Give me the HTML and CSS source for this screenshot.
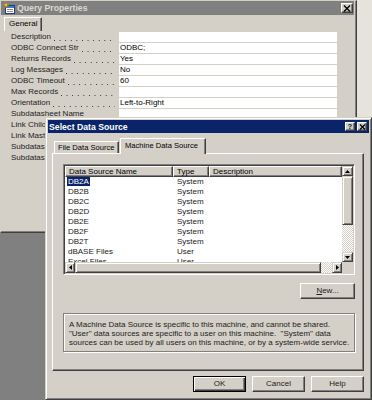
FILE: index.html
```html
<!DOCTYPE html>
<html lang="en">
<head>
    <meta charset="UTF-8">
    <title>Select Data Source</title>
    <link rel="stylesheet" href="styles.css">
</head>
<body>
<div class="desk">

    <!-- Query Properties window (behind) -->
    <div class="win qp">
        <div class="caption inactive">
            <svg class="app-icon" width="12" height="12" viewBox="0 0 12 12">
                <rect x="2.5" y="3.5" width="9" height="8" fill="#fff" stroke="#1c3c8c"/>
                <rect x="3" y="4" width="8" height="2" fill="#4a78c0"/>
                <path d="M4 7.5h6M4 9.5h6" stroke="#909090"/>
                <path d="M3 0L3.8 2.2L6 3L3.8 3.8L3 6L2.2 3.8L0 3L2.2 2.2Z" fill="#ffd200" stroke="#b07800" stroke-width=".5"/>
            </svg>
            <span class="caption-text">Query Properties</span>
            <span class="cap-btn close-big">
                <svg width="8" height="7" viewBox="0 0 8 7"><path d="M1 .5L7 6.5M7 .5L1 6.5" stroke="#000" stroke-width="1.4"/></svg>
            </span>
        </div>
        <div class="qp-tabs"><span class="qp-tab">General</span></div>
        <div class="grid">
            <div class="prop"><span class="prop-name"><span>Description</span><span class="dots"></span></span><span class="prop-val"></span></div>
            <div class="prop"><span class="prop-name"><span>ODBC Connect Str</span><span class="dots"></span></span><span class="prop-val">ODBC;</span></div>
            <div class="prop"><span class="prop-name"><span>Returns Records</span><span class="dots"></span></span><span class="prop-val">Yes</span></div>
            <div class="prop"><span class="prop-name"><span>Log Messages</span><span class="dots"></span></span><span class="prop-val">No</span></div>
            <div class="prop"><span class="prop-name"><span>ODBC Timeout</span><span class="dots"></span></span><span class="prop-val">60</span></div>
            <div class="prop"><span class="prop-name"><span>Max Records</span><span class="dots"></span></span><span class="prop-val"></span></div>
            <div class="prop"><span class="prop-name"><span>Orientation</span><span class="dots"></span></span><span class="prop-val">Left-to-Right</span></div>
            <div class="prop"><span class="prop-name"><span>Subdatasheet Name</span><span class="dots"></span></span><span class="prop-val"></span></div>
            <div class="prop"><span class="prop-name"><span>Link Child Fields</span><span class="dots"></span></span><span class="prop-val"></span></div>
            <div class="prop"><span class="prop-name"><span>Link Master Fields</span><span class="dots"></span></span><span class="prop-val"></span></div>
            <div class="prop"><span class="prop-name"><span>Subdatasheet Height</span><span class="dots"></span></span><span class="prop-val"></span></div>
            <div class="prop"><span class="prop-name"><span>Subdatasheet Expanded</span><span class="dots"></span></span><span class="prop-val"></span></div>
        </div>
    </div>

    <!-- Select Data Source dialog (front) -->
    <div class="win dlg">
        <div class="caption active">
            <span class="caption-text">Select Data Source</span>
            <span class="cap-btn help">?</span>
            <span class="cap-btn">
                <svg width="7" height="6" viewBox="0 0 7 6"><path d="M1 .5L6 5.5M6 .5L1 5.5" stroke="#000" stroke-width="1.3"/></svg>
            </span>
        </div>

        <div class="tabs">
            <span class="tab file">File Data Source</span>
            <span class="tab on">Machine Data Source</span>
        </div>

        <div class="panel">
            <div class="lv">
                <div class="lv-inner">
                    <div class="lv-main">
                        <div class="lv-head">
                            <span class="hd hd-name">Data Source Name</span>
                            <span class="hd hd-type">Type</span>
                            <span class="hd hd-desc">Description</span>
                        </div>
                        <div class="lv-row"><span class="c1"><span class="sel">DB2A</span></span><span class="c2">System</span></div>
                        <div class="lv-row"><span class="c1"><span>DB2B</span></span><span class="c2">System</span></div>
                        <div class="lv-row"><span class="c1"><span>DB2C</span></span><span class="c2">System</span></div>
                        <div class="lv-row"><span class="c1"><span>DB2D</span></span><span class="c2">System</span></div>
                        <div class="lv-row"><span class="c1"><span>DB2E</span></span><span class="c2">System</span></div>
                        <div class="lv-row"><span class="c1"><span>DB2F</span></span><span class="c2">System</span></div>
                        <div class="lv-row"><span class="c1"><span>DB2T</span></span><span class="c2">System</span></div>
                        <div class="lv-row"><span class="c1"><span>dBASE Files</span></span><span class="c2">User</span></div>
                        <div class="lv-row"><span class="c1"><span>Excel Files</span></span><span class="c2">User</span></div>
                    </div>
                    <div class="vs">
                        <span class="sb-btn"><svg width="5" height="3" viewBox="0 0 5 3"><path d="M0 3L2.5 0L5 3Z"/></svg></span>
                        <span class="thumb vthumb"></span>
                        <span class="track"></span>
                        <span class="sb-btn"><svg width="5" height="3" viewBox="0 0 5 3"><path d="M0 0L2.5 3L5 0Z"/></svg></span>
                    </div>
                    <div class="hs">
                        <span class="sb-btn"><svg width="3" height="5" viewBox="0 0 3 5"><path d="M3 0L0 2.5L3 5Z"/></svg></span>
                        <span class="thumb hthumb"></span>
                        <span class="track"></span>
                        <span class="sb-btn"><svg width="3" height="5" viewBox="0 0 3 5"><path d="M0 0L3 2.5L0 5Z"/></svg></span>
                    </div>
                    <div class="corner"></div>
                </div>
            </div>

            <div class="row-right">
                <span class="btn new"><u>N</u>ew...</span>
            </div>

            <div class="desc">
                A Machine Data Source is specific to this machine, and cannot be shared.<br>
                "User" data sources are specific to a user on this machine.&nbsp; "System" data<br>
                sources can be used by all users on this machine, or by a system-wide service.
            </div>
        </div>

        <div class="actions">
            <span class="btn wide default">OK</span>
            <span class="btn wide">Cancel</span>
            <span class="btn wide">Help</span>
        </div>
    </div>

</div>
</body>
</html>
```

FILE: styles.css
```css
* {
    box-sizing: border-box;
}

body {
    margin: 0;
    font-family: "Liberation Sans", Arial, sans-serif;
    font-size: 8px;
    color: #000;
}

.desk {
    position: relative;
    width: 372px;
    height: 400px;
    overflow: hidden;
    background: linear-gradient(to right, #808080 357px, #e6e3dc 357px);
}

.win {
    position: absolute;
    background: #d4d0c8;
}

/* ---------- caption bars ---------- */

.caption {
    display: flex;
    align-items: center;
    font-weight: bold;
    font-size: 8.7px;
    white-space: nowrap;
}

.caption.inactive {
    height: 14px;
    padding: 0 1px 0 2px;
    background: #808080;
    color: #dcd9d2;
}

.caption.active {
    height: 13px;
    padding: 0 2px 0 1px;
    background: #0a246a;
    color: #fff;
}

.app-icon {
    margin-right: 2px;
    flex-shrink: 0;
}

.caption-text {
    flex: 1;
}

.cap-btn {
    display: flex;
    align-items: center;
    justify-content: center;
    width: 10px;
    height: 9px;
    background: #d4d0c8;
    border: 1px solid;
    border-color: #fff #404040 #404040 #fff;
    box-shadow: inset -1px -1px #808080;
    color: #000;
    font-size: 7px;
    margin-left: 2px;
}

.cap-btn.close-big {
    width: 12px;
    height: 10px;
}

.cap-btn.help {
    padding-bottom: 1px;
}

/* ---------- query properties ---------- */

.qp {
    left: 0;
    top: 0;
    width: 357px;
    height: 233px;
    border-top: 1px solid #d4d0c8;
    border-left: 1px solid #d4d0c8;
    border-right: 1px solid #404040;
    border-bottom: 1px solid #404040;
    box-shadow: inset -1px -1px #808080;
    padding: 0 2px 2px 0;
}

.qp-tabs {
    display: flex;
    align-items: flex-end;
    height: 16px;
    padding-left: 3px;
}

.qp-tab {
    width: 38px;
    height: 14px;
    padding-left: 4px;
    line-height: 12px;
    border-top: 1px solid #fff;
    border-left: 1px solid #fff;
    border-right: 1px solid #404040;
    box-shadow: inset -1px 0 #808080;
}

.grid {
    padding-top: 1px;
}

.prop {
    display: flex;
    height: 11px;
}

.prop-name {
    display: flex;
    flex-shrink: 0;
    width: 118px;
    padding: 0 4px 0 10px;
    line-height: 10px;
    white-space: nowrap;
    overflow: hidden;
    color: #222;
}

/* dotted leader after each property name */
.dots {
    flex: 1;
    min-width: 0;
    margin: 0 0 2px 3px;
    background: linear-gradient(to right, #333 1px, transparent 1px) left bottom / 5.6px 1px repeat-x;
}

.prop-val {
    flex-shrink: 0;
    width: 218px;
    height: 10px;
    padding-left: 1px;
    line-height: 10px;
    background: #fff;
    white-space: nowrap;
}

/* ---------- select data source ---------- */

.dlg {
    left: 45px;
    top: 117px;
    width: 327px;
    height: 283px;
    border: 1px solid;
    border-color: #d4d0c8 #404040 #404040 #d4d0c8;
    box-shadow: inset 1px 1px #fff, inset -1px -1px #808080;
    padding: 2px;
}

.tabs {
    display: flex;
    align-items: flex-end;
    height: 20px;
    padding-left: 6px;
    font-size: 7.6px;
}

.tab {
    height: 12px;
    padding-left: 3px;
    line-height: 11px;
    white-space: nowrap;
    border-top: 1px solid #fff;
    border-left: 1px solid #fff;
    border-right: 1px solid #404040;
    box-shadow: inset -1px 0 #808080;
}

.tab.file {
    width: 65px;
}

.tab.on {
    position: relative;
    z-index: 1;
    width: 86px;
    height: 16px;
    margin-left: 1px;
    margin-bottom: -1px;
    padding-left: 4px;
    line-height: 14px;
    background: #d4d0c8;
}

.panel {
    height: 218px;
    margin: 0 5px 0 4px;
    padding: 10px 0 0 10px;
    border-top: 1px solid #fff;
    border-left: 1px solid #fff;
    border-right: 1px solid #404040;
    border-bottom: 1px solid #404040;
    box-shadow: inset -1px -1px #808080;
}

.lv {
    width: 292px;
    height: 111px;
    padding: 1px;
    background: #d4d0c8;
    border: 1px solid;
    border-color: #808080 #fff #fff #808080;
    box-shadow: inset 1px 1px #404040;
}

.lv-inner {
    display: grid;
    grid-template-columns: 277px 11px;
    grid-template-rows: 96px 11px;
    height: 100%;
}

.lv-main {
    background: #fff;
    overflow: hidden;
}

.lv-head {
    display: flex;
    height: 11px;
}

.hd {
    height: 11px;
    padding-left: 3px;
    line-height: 9px;
    background: #d4d0c8;
    border-top: 1px solid #fff;
    border-left: 1px solid #fff;
    border-right: 1px solid #404040;
    border-bottom: 1px solid #404040;
    box-shadow: inset -1px -1px #808080;
    white-space: nowrap;
}

.hd-name {
    width: 108px;
}

.hd-type {
    width: 36px;
}

.hd-desc {
    flex: 1;
}

.lv-row {
    display: flex;
    height: 10px;
    line-height: 10px;
    white-space: nowrap;
    color: #222;
}

.c1 {
    width: 108px;
    padding-left: 2px;
}

.c1 span {
    padding: 0 1px;
}

.c1 .sel {
    background: #0a246a;
    color: #fff;
}

.c2 {
    width: 36px;
    padding-left: 4px;
}

/* scrollbars */

.vs,
.hs {
    display: flex;
    background: repeating-conic-gradient(#fff 0 25%, #d4d0c8 0 50%) 0 0 / 2px 2px;
}

.vs {
    flex-direction: column;
}

.sb-btn,
.thumb {
    display: flex;
    align-items: center;
    justify-content: center;
    background: #d4d0c8;
    border: 1px solid;
    border-color: #d4d0c8 #404040 #404040 #d4d0c8;
    box-shadow: inset 1px 1px #fff, inset -1px -1px #808080;
    flex-shrink: 0;
}

.vs .sb-btn {
    height: 10px;
}

.hs .sb-btn {
    width: 10px;
}

.vthumb {
    height: 49px;
}

.hthumb {
    width: 246px;
}

.track {
    flex: 1;
}

.corner {
    background: #d4d0c8;
}

/* buttons and text */

.row-right {
    display: flex;
    justify-content: flex-end;
    width: 292px;
    margin-top: 8px;
}

.btn {
    display: block;
    height: 16px;
    line-height: 14px;
    text-align: center;
    background: #d4d0c8;
    border: 1px solid;
    border-color: #fff #404040 #404040 #fff;
    box-shadow: inset -1px -1px #808080;
    color: #222;
}

.btn.new {
    width: 55px;
}

.btn.wide {
    width: 53px;
}

.btn.default {
    border-color: #000;
    box-shadow: inset 1px 1px #fff, inset -1px -1px #404040, inset -2px -2px #808080;
}

.desc {
    width: 292px;
    height: 39px;
    margin-top: 14px;
    padding: 6px 4px 0 5px;
    line-height: 9px;
    white-space: nowrap;
    color: #222;
    border: 1px solid #808080;
    box-shadow: inset 1px 1px #fff, 1px 1px #fff;
}

.actions {
    display: flex;
    justify-content: flex-end;
    gap: 6px;
    margin: 5px 5px 0 0;
}
```
